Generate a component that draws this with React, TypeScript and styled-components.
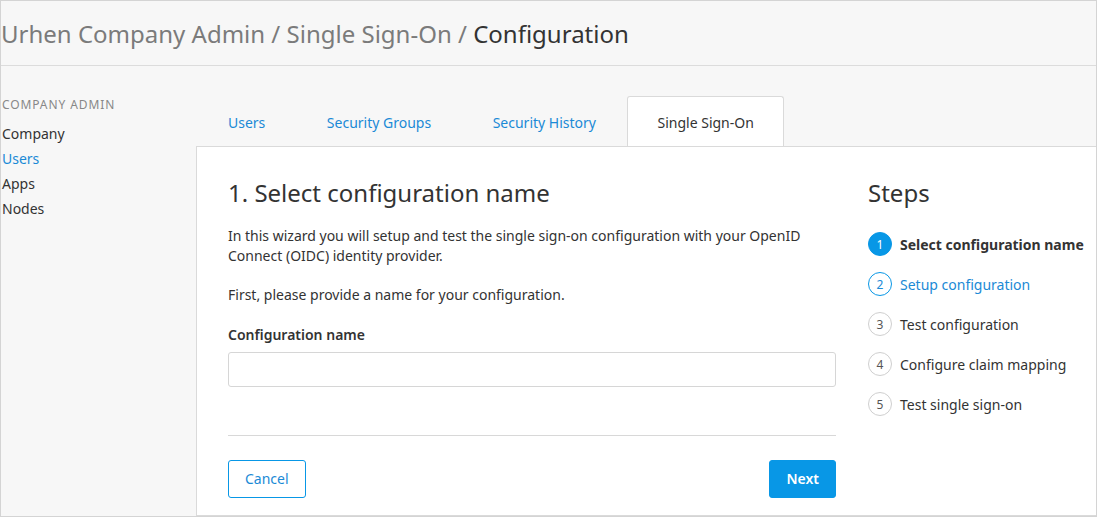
import styled, { createGlobalStyle } from "styled-components";

const GlobalStyle = createGlobalStyle`
  html, body {
    margin: 0;
    padding: 0;
    background: #fff;
  }
  body {
    font-family: "Noto Sans", "Open Sans", sans-serif;
    color: #333;
  }
  * {
    box-sizing: border-box;
  }
`;

const BLUE = "#1b8ad6";
const BUTTON_BLUE = "#0897e6";

const Frame = styled.div`
  width: 1097px;
  height: 517px;
  border: 1px solid #d4d4d4;
  background: #f7f7f7;
  display: flex;
  flex-direction: column;
  overflow: hidden;
`;

const Header = styled.header`
  height: 65px;
  border-bottom: 1px solid #dcdcdc;
  padding: 17px 0 0 0;
`;

const Title = styled.h1`
  margin: 0;
  font-size: 24px;
  font-weight: 400;
  line-height: 32px;
  color: #7b7b7b;
`;

const Current = styled.span`
  color: #333;
`;

const Main = styled.div`
  flex: 1;
  display: flex;
  padding-top: 30px;
  min-height: 0;
`;

const Sidebar = styled.nav`
  width: 195px;
  flex-shrink: 0;
  padding-left: 1px;
`;

const SideTitle = styled.div`
  font-size: 12px;
  line-height: 18px;
  letter-spacing: 0.9px;
  color: #888;
  text-transform: uppercase;
  margin-bottom: 7px;
`;

const SideItem = styled.div<{ $active?: boolean }>`
  font-size: 14px;
  line-height: 25px;
  color: ${(p) => (p.$active ? BLUE : "#333")};
`;

const Content = styled.div`
  flex: 1;
  display: flex;
  flex-direction: column;
  min-width: 0;
`;

const Tabs = styled.div`
  display: flex;
  gap: 1.5px;
  padding-left: 2px;
  height: 50px;
`;

const Tab = styled.div<{ $active?: boolean }>`
  padding: 16px 29px 0;
  font-size: 14px;
  line-height: 20px;
  color: ${(p) => (p.$active ? "#333" : BLUE)};
  background: ${(p) => (p.$active ? "#fff" : "transparent")};
  border: 1px solid ${(p) => (p.$active ? "#dadada" : "transparent")};
  border-bottom: none;
  border-radius: 3px 3px 0 0;
`;

const Panel = styled.section`
  flex: 1;
  background: #fff;
  border: 1px solid #dadada;
  border-right: none;
  display: flex;
  gap: 32px;
  padding: 30px 0 0 31px;
`;

const FormColumn = styled.div`
  width: 608px;
  flex-shrink: 0;
`;

const Heading = styled.h2`
  margin: 0 0 17px;
  font-size: 24px;
  font-weight: 400;
  line-height: 32px;
  color: #333;
`;

const Paragraph = styled.p`
  margin: 0 0 20px;
  font-size: 14px;
  line-height: 19.6px;
  color: #333;
`;

const Label = styled.label`
  display: block;
  font-size: 14px;
  font-weight: 600;
  line-height: 20px;
  color: #333;
  margin-bottom: 7px;
`;

const Input = styled.input`
  display: block;
  width: 100%;
  height: 35px;
  border: 1px solid #d6d6d6;
  border-radius: 3px;
  font-family: inherit;
  font-size: 14px;
  padding: 0 10px;
  outline: none;
`;

const Divider = styled.hr`
  margin: 48px 0 24px;
  border: none;
  border-top: 1px solid #d8d8d8;
`;

const Actions = styled.div`
  display: flex;
  justify-content: space-between;
`;

const Button = styled.button<{ $primary?: boolean }>`
  height: 38px;
  padding: 0 16px;
  border-radius: 3px;
  font-family: inherit;
  font-size: 14px;
  font-weight: ${(p) => (p.$primary ? 600 : 400)};
  border: 1px solid ${BUTTON_BLUE};
  background: ${(p) => (p.$primary ? BUTTON_BLUE : "#fff")};
  color: ${(p) => (p.$primary ? "#fff" : BLUE)};
`;

const StepsColumn = styled.aside`
  flex: 1;
  min-width: 0;
`;

const StepsTitle = styled.h2`
  margin: 0 0 23px;
  font-size: 24px;
  font-weight: 400;
  line-height: 32px;
  color: #333;
`;

const StepList = styled.ol`
  list-style: none;
  margin: 0;
  padding: 0;
  display: flex;
  flex-direction: column;
  gap: 16px;
`;

type StepState = "active" | "next" | "todo";

const StepRow = styled.li<{ $state: StepState }>`
  display: flex;
  align-items: center;
  gap: 8px;
  height: 24px;
  font-size: 14px;
  white-space: nowrap;
  font-weight: ${(p) => (p.$state === "active" ? 700 : 400)};
  color: ${(p) => (p.$state === "next" ? BLUE : "#333")};
`;

const StepNumber = styled.span<{ $state: StepState }>`
  width: 24px;
  height: 24px;
  flex-shrink: 0;
  border-radius: 50%;
  display: flex;
  align-items: center;
  justify-content: center;
  font-size: 12px;
  font-weight: 400;
  border: 1px solid
    ${(p) => (p.$state === "todo" ? "#cfcfcf" : BUTTON_BLUE)};
  background: ${(p) => (p.$state === "active" ? BUTTON_BLUE : "#fff")};
  color: ${(p) =>
    p.$state === "active" ? "#fff" : p.$state === "next" ? BLUE : "#555"};
`;

const steps: { label: string; state: StepState }[] = [
  { label: "Select configuration name", state: "active" },
  { label: "Setup configuration", state: "next" },
  { label: "Test configuration", state: "todo" },
  { label: "Configure claim mapping", state: "todo" },
  { label: "Test single sign-on", state: "todo" },
];

export default function App() {
  return (
    <>
      <GlobalStyle />
      <Frame>
        <Header>
          <Title>
            Urhen Company Admin / Single Sign-On / <Current>Configuration</Current>
          </Title>
        </Header>
        <Main>
          <Sidebar>
            <SideTitle>Company Admin</SideTitle>
            <SideItem>Company</SideItem>
            <SideItem $active>Users</SideItem>
            <SideItem>Apps</SideItem>
            <SideItem>Nodes</SideItem>
          </Sidebar>
          <Content>
            <Tabs>
              <Tab>Users</Tab>
              <Tab>Security Groups</Tab>
              <Tab>Security History</Tab>
              <Tab $active>Single Sign-On</Tab>
            </Tabs>
            <Panel>
              <FormColumn>
                <Heading>1. Select configuration name</Heading>
                <Paragraph>
                  In this wizard you will setup and test the single sign-on
                  configuration with your OpenID Connect (OIDC) identity provider.
                </Paragraph>
                <Paragraph>First, please provide a name for your configuration.</Paragraph>
                <Label htmlFor="config-name">Configuration name</Label>
                <Input id="config-name" type="text" />
                <Divider />
                <Actions>
                  <Button>Cancel</Button>
                  <Button $primary>Next</Button>
                </Actions>
              </FormColumn>
              <StepsColumn>
                <StepsTitle>Steps</StepsTitle>
                <StepList>
                  {steps.map((s, i) => (
                    <StepRow key={s.label} $state={s.state}>
                      <StepNumber $state={s.state}>{i + 1}</StepNumber>
                      {s.label}
                    </StepRow>
                  ))}
                </StepList>
              </StepsColumn>
            </Panel>
          </Content>
        </Main>
      </Frame>
    </>
  );
}
